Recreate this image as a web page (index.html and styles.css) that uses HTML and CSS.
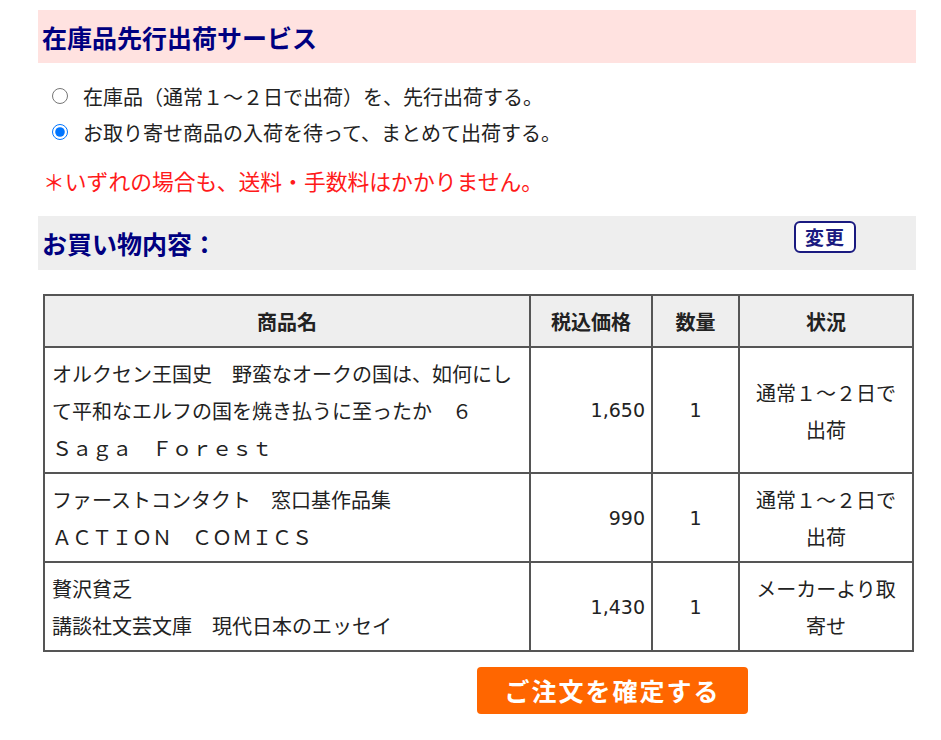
FILE: index.html
```html
<!DOCTYPE html>
<html lang="ja">

<head>
    <meta charset="UTF-8">
    <meta name="viewport" content="width=device-width, initial-scale=1.0">
    <title>ご注文内容の確認</title>
    <link rel="stylesheet" href="styles.css">
</head>

<body>
    <div class="wrap">
        <!-- 先行出荷 -->
        <h2 class="band band_pink">在庫品先行出荷サービス</h2>
        <div class="ship_opts">
            <label class="opt">
                <input type="radio" name="ship" value="1">
                <span>在庫品（通常１～２日で出荷）を、先行出荷する。</span>
            </label>
            <label class="opt">
                <input type="radio" name="ship" value="2" checked>
                <span>お取り寄せ商品の入荷を待って、まとめて出荷する。</span>
            </label>
        </div>
        <p class="note">＊いずれの場合も、送料・手数料はかかりません。</p>

        <!-- お買い物内容 -->
        <div class="band band_gray">
            <h2>お買い物内容：</h2>
            <a href="javascript:;" class="btn_change">変更</a>
        </div>
        <table class="cart">
            <colgroup>
                <col class="c_name">
                <col class="c_price">
                <col class="c_qty">
                <col class="c_stat">
            </colgroup>
            <thead>
                <tr>
                    <th>商品名</th>
                    <th>税込価格</th>
                    <th>数量</th>
                    <th>状況</th>
                </tr>
            </thead>
            <tbody>
                <tr>
                    <td class="name">オルクセン王国史　野蛮なオークの国は、如何にして平和なエルフの国を焼き払うに至ったか　６<br>Ｓａｇａ　Ｆｏｒｅｓｔ</td>
                    <td class="price">1,650</td>
                    <td class="qty">1</td>
                    <td class="stat">通常１～２日で出荷</td>
                </tr>
                <tr>
                    <td class="name">ファーストコンタクト　窓口基作品集<br>ＡＣＴＩＯＮ　ＣＯＭＩＣＳ</td>
                    <td class="price">990</td>
                    <td class="qty">1</td>
                    <td class="stat">通常１～２日で出荷</td>
                </tr>
                <tr>
                    <td class="name">贅沢貧乏<br>講談社文芸文庫　現代日本のエッセイ</td>
                    <td class="price">1,430</td>
                    <td class="qty">1</td>
                    <td class="stat">メーカーより取寄せ</td>
                </tr>
            </tbody>
        </table>

        <div class="actions">
            <div></div>
            <div>
                <a href="javascript:;" class="btn_order">ご注文を確定する</a>
            </div>
        </div>
    </div>
</body>

</html>
```

FILE: styles.css
```css
* {
    margin: 0;
    padding: 0;
    box-sizing: border-box;
}

body {
    font-family: "Noto Sans CJK JP", "Noto Sans", sans-serif;
    font-size: 20px;
    color: #222;
    background: #fff;
}

a {
    text-decoration: none;
}

.wrap {
    width: 916px;
    padding: 10px 0 0 38px;
}

.band {
    height: 53px;
    display: flex;
    align-items: center;
    padding-left: 4px;
    font-size: 25px;
    font-weight: bold;
    color: #000080;
}

.band_pink {
    background: #ffe2e0;
}

.band_gray {
    height: 54px;
    margin-top: 17px;
    background: #eee;
    justify-content: space-between;
    align-items: flex-start;
    padding-right: 60px;
}

.band_gray h2 {
    font-size: 25px;
    line-height: 54px;
}

.ship_opts {
    margin-top: 15px;
}

.opt {
    display: flex;
    align-items: center;
    height: 36px;
    padding-left: 14px;
    font-size: 20px;
}

.opt input {
    width: 16px;
    height: 16px;
    margin: 0 15px 0 0;
}

.note {
    margin-top: 13px;
    padding-left: 5px;
    line-height: 36px;
    color: #ff1a1a;
    font-size: 21.8px;
}

.btn_change {
    margin-top: 5px;
    width: 62px;
    height: 32px;
    line-height: 27px;
    text-align: center;
    border: 2px solid #1a1a80;
    border-radius: 6px;
    background: #fff;
    color: #1a1a80;
    font-size: 19px;
    font-weight: bold;
    letter-spacing: 1px;
}

.cart {
    width: 869px;
    margin: 24px 0 0 5px;
    border-collapse: collapse;
    table-layout: fixed;
    border: 2px solid #555;
}

.cart th,
.cart td {
    border: 2px solid #555;
    line-height: 37px;
    padding: 7px 6px 6px;
}

.cart th {
    background: #eee;
    font-weight: bold;
    font-size: 20px;
    text-align: center;
}

.cart .c_name {
    width: 486px;
}

.cart .c_price {
    width: 122px;
}

.cart .c_qty {
    width: 87px;
}

.cart .c_stat {
    width: 174px;
}

.cart td.name {
    padding-left: 7px;
}

.cart td.price,
.cart td.qty {
    font-family: "DejaVu Sans", sans-serif;
    font-size: 19px;
}

.cart td.price {
    text-align: right;
}

.cart td.qty {
    text-align: center;
}

.cart td.stat {
    text-align: center;
    padding: 7px 12px 6px;
}

.actions {
    display: grid;
    grid-template-columns: 1fr 1fr;
    margin-top: 15px;
}

.btn_order {
    display: block;
    width: 271px;
    height: 47px;
    line-height: 47px;
    text-align: center;
    background: #ff6600;
    color: #fff;
    border-radius: 4px;
    font-size: 25px;
    font-weight: bold;
    letter-spacing: 2px;
}
```
